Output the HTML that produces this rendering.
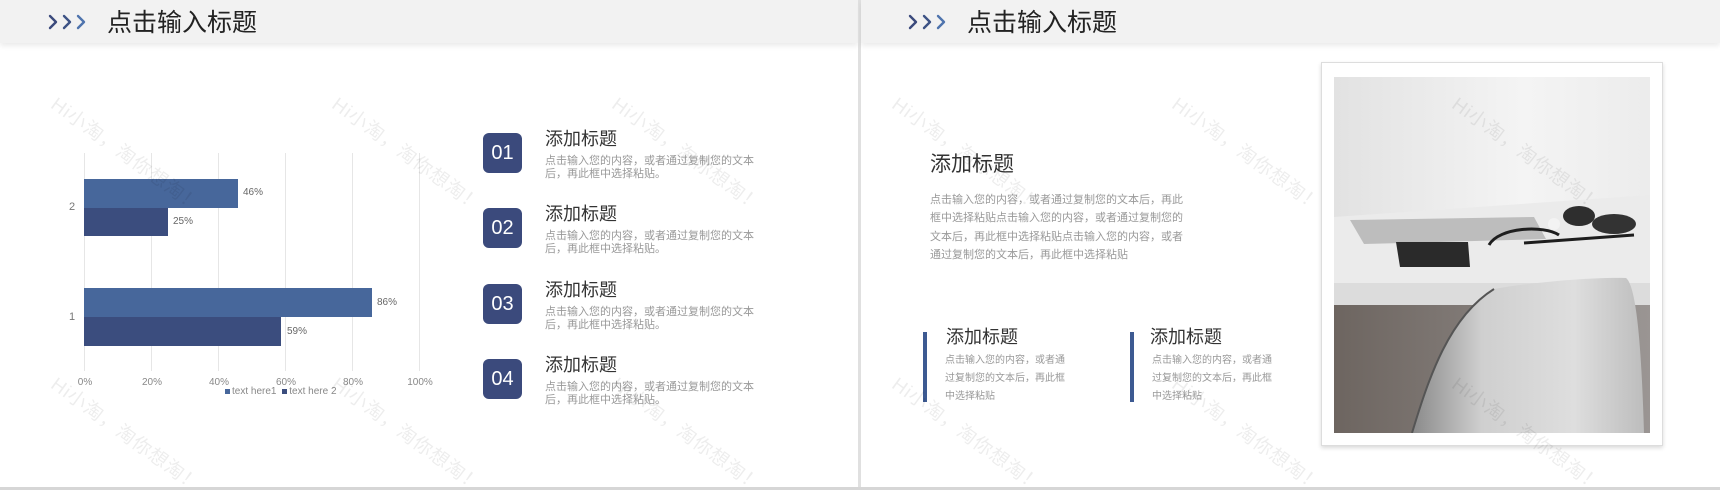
<!DOCTYPE html>
<html><head><meta charset="utf-8"><style>
*{margin:0;padding:0;box-sizing:border-box}
body{width:1720px;height:490px;background:#fff;position:relative;overflow:hidden;font-family:"Liberation Sans","Noto Sans CJK SC",sans-serif}
.a{position:absolute}
.hdr{position:absolute;top:0;height:43px;background:#f2f2f2;box-shadow:0 3px 5px rgba(0,0,0,.08)}
.ttl{position:absolute;top:8px;font-size:25px;color:#222;line-height:30px;white-space:nowrap}
.chev{position:absolute;top:13px}
.wm{position:absolute;color:rgba(0,0,0,.07);font-size:19px;transform:rotate(36deg);transform-origin:0 0;white-space:nowrap;letter-spacing:1px}
.box{position:absolute;left:483px;width:39px;height:40px;background:#3b4a7c;border-radius:6px;color:#fff;font-size:20px;line-height:40px;text-align:center;font-weight:300}
.it{position:absolute;left:545px;font-size:18px;color:#333;line-height:22px;white-space:nowrap}
.id{position:absolute;left:545px;width:210px;font-size:11px;color:#999;line-height:13px}
.gl{position:absolute;top:153px;height:218px;width:1px;background:#e6e6e6}
.ax{position:absolute;top:377px;font-size:10px;color:#888;transform:translateX(-50%)}
.bar{position:absolute;left:84px}
.bl{position:absolute;font-size:10px;color:#666}
</style></head><body>
<div class="hdr" style="left:0;width:858px"></div>
<svg class="chev" style="left:47px" width="48" height="18" viewBox="0 0 48 18"><g fill="none" stroke-width="2.4" stroke-linecap="round" stroke-linejoin="round"><path d="M3 3l6 6-6 6" stroke="#3b4a7c"/><path d="M17 3l6 6-6 6" stroke="#3d5385"/><path d="M31 3l6 6-6 6" stroke="#4f74ad"/></g></svg>
<div class="ttl" style="left:107px">点击输入标题</div>

<div class="gl" style="left:84px"></div><div class="gl" style="left:151px"></div><div class="gl" style="left:218px"></div><div class="gl" style="left:285px"></div><div class="gl" style="left:352px"></div><div class="gl" style="left:419px"></div>
<div class="bar" style="top:179px;height:29px;width:154px;background:#47679b"></div>
<div class="bar" style="top:208px;height:28px;width:84px;background:#3b4d7e"></div>
<div class="bar" style="top:288px;height:29px;width:288px;background:#47679b"></div>
<div class="bar" style="top:317px;height:29px;width:197px;background:#3b4d7e"></div>
<div class="bl" style="left:243px;top:187px">46%</div>
<div class="bl" style="left:173px;top:216px">25%</div>
<div class="bl" style="left:377px;top:297px">86%</div>
<div class="bl" style="left:287px;top:326px">59%</div>
<div class="bl" style="left:69px;top:201px;font-size:11px;color:#777">2</div>
<div class="bl" style="left:69px;top:311px;font-size:11px;color:#777">1</div>
<div class="ax" style="left:85px">0%</div><div class="ax" style="left:152px">20%</div><div class="ax" style="left:219px">40%</div><div class="ax" style="left:286px">60%</div><div class="ax" style="left:353px">80%</div><div class="ax" style="left:420px">100%</div>
<div class="a" style="left:225px;top:386px;font-size:10px;color:#888;white-space:nowrap"><span style="display:inline-block;width:5px;height:5px;background:#47679b;margin-right:2px"></span>text here1 <span style="display:inline-block;width:5px;height:5px;background:#3b4d7e;margin:0 2px 0 3px"></span>text here 2</div>

<div class="box" style="top:133px">01</div><div class="box" style="top:208px">02</div><div class="box" style="top:284px">03</div><div class="box" style="top:359px">04</div>
<div class="it" style="top:128px">添加标题</div><div class="id" style="top:155px">点击输入您的内容，或者通过复制您的文本后，再此框中选择粘贴。</div>
<div class="it" style="top:203px">添加标题</div><div class="id" style="top:230px">点击输入您的内容，或者通过复制您的文本后，再此框中选择粘贴。</div>
<div class="it" style="top:279px">添加标题</div><div class="id" style="top:306px">点击输入您的内容，或者通过复制您的文本后，再此框中选择粘贴。</div>
<div class="it" style="top:354px">添加标题</div><div class="id" style="top:381px">点击输入您的内容，或者通过复制您的文本后，再此框中选择粘贴。</div>

<div class="a" style="left:858px;top:0;width:3px;height:490px;background:#e0e0e0"></div>

<div class="hdr" style="left:861px;width:859px"></div>
<svg class="chev" style="left:907px" width="48" height="18" viewBox="0 0 48 18"><g fill="none" stroke-width="2.4" stroke-linecap="round" stroke-linejoin="round"><path d="M3 3l6 6-6 6" stroke="#3b4a7c"/><path d="M17 3l6 6-6 6" stroke="#3d5385"/><path d="M31 3l6 6-6 6" stroke="#4f74ad"/></g></svg>
<div class="ttl" style="left:967px">点击输入标题</div>

<div class="a" style="left:930px;top:148px;font-size:21px;color:#333;white-space:nowrap">添加标题</div>
<div class="a" style="left:930px;top:191px;width:255px;font-size:11px;color:#999;line-height:18.4px">点击输入您的内容，或者通过复制您的文本后，再此框中选择粘贴点击输入您的内容，或者通过复制您的文本后，再此框中选择粘贴点击输入您的内容，或者通过复制您的文本后，再此框中选择粘贴</div>
<div class="a" style="left:923px;top:332px;width:4px;height:70px;background:#3d5a92"></div>
<div class="a" style="left:1130px;top:332px;width:4px;height:70px;background:#3d5a92"></div>
<div class="a" style="left:946px;top:323px;font-size:18px;color:#333">添加标题</div>
<div class="a" style="left:1150px;top:323px;font-size:18px;color:#333">添加标题</div>
<div class="a" style="left:945px;top:352px;width:121px;font-size:10px;color:#999;line-height:18px">点击输入您的内容，或者通过复制您的文本后，再此框中选择粘贴</div>
<div class="a" style="left:1152px;top:352px;width:121px;font-size:10px;color:#999;line-height:18px">点击输入您的内容，或者通过复制您的文本后，再此框中选择粘贴</div>

<div class="a" style="left:1321px;top:62px;width:342px;height:384px;background:#fff;border:1px solid #ddd;box-shadow:0 2px 4px rgba(0,0,0,.15)"></div>
<svg class="a" style="left:1334px;top:77px" width="316" height="356" viewBox="0 0 316 356">
<defs>
<linearGradient id="w" x1="0" y1="0" x2="1" y2="0"><stop offset="0" stop-color="#e2e2e2"/><stop offset=".6" stop-color="#f4f4f4"/><stop offset="1" stop-color="#ececec"/></linearGradient>
<linearGradient id="u" x1="0" y1="0" x2="1" y2="0"><stop offset="0" stop-color="#6d6560"/><stop offset="1" stop-color="#9a9593"/></linearGradient>
<linearGradient id="c" x1="0" y1="0" x2="1" y2="0"><stop offset="0" stop-color="#8a8a8a"/><stop offset=".3" stop-color="#cfcfcf"/><stop offset=".7" stop-color="#dedede"/><stop offset="1" stop-color="#bdbdbd"/></linearGradient>
</defs>
<rect width="316" height="356" fill="url(#w)"/>
<path d="M0 140L316 118V206H0Z" fill="#ebebeb"/>
<rect y="206" width="316" height="22" fill="#dcdcdc"/>
<rect y="228" width="316" height="128" fill="url(#u)"/>
<path d="M78 356C95 300 115 240 160 212C200 205 260 200 292 201C304 210 308 290 310 356Z" fill="url(#c)"/>
<path d="M78 356C95 300 115 240 160 212" stroke="#555" stroke-width="2" fill="none"/>
<path d="M16 143L200 140L212 162L30 167Z" fill="#bdbdbd"/>
<path d="M62 165L134 165L136 190L66 190Z" fill="#2a2a2a"/>
<circle cx="220" cy="147" r="6" fill="#f3f3f3"/>
<ellipse cx="245" cy="139" rx="16" ry="10" fill="#2e2e2e"/>
<ellipse cx="280" cy="147" rx="22" ry="10" fill="#333"/>
<path d="M155 168C165 150 210 148 225 158M190 166L300 158" stroke="#1e1e1e" stroke-width="3" fill="none"/>
</svg>

<div class="a" style="left:0;top:487px;width:1720px;height:3px;background:#d6d6d6"></div>

<div class="wm" style="left:62px;top:90px">Hi小淘，淘你想淘！</div>
<div class="wm" style="left:343px;top:90px">Hi小淘，淘你想淘！</div>
<div class="wm" style="left:623px;top:90px">Hi小淘，淘你想淘！</div>
<div class="wm" style="left:903px;top:90px">Hi小淘，淘你想淘！</div>
<div class="wm" style="left:1183px;top:90px">Hi小淘，淘你想淘！</div>
<div class="wm" style="left:1463px;top:90px">Hi小淘，淘你想淘！</div>
<div class="wm" style="left:62px;top:370px">Hi小淘，淘你想淘！</div>
<div class="wm" style="left:343px;top:370px">Hi小淘，淘你想淘！</div>
<div class="wm" style="left:623px;top:370px">Hi小淘，淘你想淘！</div>
<div class="wm" style="left:903px;top:370px">Hi小淘，淘你想淘！</div>
<div class="wm" style="left:1183px;top:370px">Hi小淘，淘你想淘！</div>
<div class="wm" style="left:1463px;top:370px">Hi小淘，淘你想淘！</div>
</body></html>
